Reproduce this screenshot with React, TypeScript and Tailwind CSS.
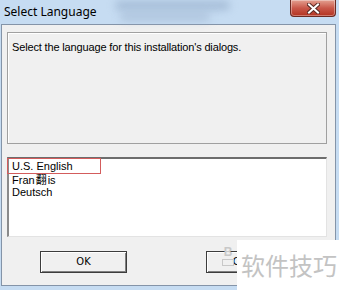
import React from 'react';

const dialogFont = { fontFamily: '"Liberation Sans", Arial, sans-serif' };
const cjkFont = { fontFamily: '"Noto Sans CJK SC", sans-serif' };

function CloseButton() {
  return (
    <div className="absolute top-0 right-[3px] w-[46px] h-[17px] rounded-b-[4px] border border-t-0 border-[#6b2a22] bg-gradient-to-b from-[#e3a091] via-[#c9584a] to-[#b3321f] flex items-center justify-center shadow-[inset_0_0_0_1px_rgba(255,255,255,0.35)]">
      <svg width="13" height="11" viewBox="0 0 13 11">
        <path d="M2 1.5 L11 9.5 M11 1.5 L2 9.5" stroke="#5a2a24" strokeWidth="4" strokeLinecap="square" />
        <path d="M2 1.5 L11 9.5 M11 1.5 L2 9.5" stroke="#ffffff" strokeWidth="2" strokeLinecap="square" />
      </svg>
    </div>
  );
}

function Button({ label }: { label: string }) {
  return (
    <div className="w-[87px] h-[22px] bg-[#f0f0f0] border border-[#3c3c3c] shadow-[inset_1px_1px_0_#ffffff,inset_-1px_-1px_0_#808080] flex items-center justify-center text-[11px] text-black" style={{ fontFamily: '"DejaVu Sans Condensed", "Liberation Sans", sans-serif' }}>
      {label}
    </div>
  );
}

export default function App() {
  return (
    <div className="relative w-[339px] h-[290px] overflow-hidden bg-[#c6dcf2] flex flex-col">
      {/* Title bar */}
      <div className="relative h-[24px] flex items-center pl-[4px] shrink-0">
        <div className="absolute left-[115px] top-[1px] w-[115px] h-[9px] rounded-full bg-[#8ea6c4] blur-[4px] opacity-60"></div>
        <div className="absolute left-[120px] top-[13px] w-[90px] h-[8px] rounded-full bg-[#95aac6] blur-[4px] opacity-50"></div>
        <span className="relative text-[12px] text-black" style={{ fontFamily: '"Noto Sans", "Open Sans", sans-serif' }}>Select Language</span>
        <CloseButton />
      </div>

      {/* Client area */}
      <div className="flex-1 ml-[1px] mr-[3px] mb-[4px] bg-[#f0f0f0] border border-[#8494a8] flex flex-col" style={dialogFont}>
        <div className="mt-[7px] ml-[5px] mr-[8px] h-[112px] border border-[#a0a0a0] shadow-[inset_1px_1px_0_#ffffff] px-[4px] pt-[6px] text-[11px] tracking-[-0.15px] text-black">
          Select the language for this installation's dialogs.
        </div>

        <div className="mt-[13px] ml-[5px] mr-[8px] h-[80px] bg-white border-t-2 border-l-2 border-t-[#6d6d6d] border-l-[#8a8a8a] border-b border-r border-b-[#e3e3e3] border-r-[#e3e3e3] pt-[1px] text-[11px] text-black">
          <div className="relative h-[13px] leading-[13px] pl-[3px] whitespace-nowrap">
            U.S. English
            <div className="absolute left-[-2px] top-[-2px] w-[94px] h-[16px] border border-[#d35c5c]"></div>
          </div>
          <div className="h-[13px] leading-[13px] pl-[3px] whitespace-nowrap">
            Fran<span className="inline-block text-[11px] leading-[13px] mx-[1px]" style={cjkFont}>翻</span>is
          </div>
          <div className="h-[13px] leading-[13px] pl-[3px] whitespace-nowrap">Deutsch</div>
        </div>

        <div className="mt-[14px] flex pl-[38px] gap-[79px]">
          <Button label="OK" />
          <Button label="Cancel" />
        </div>
      </div>

      {/* Watermark overlay */}
      <div className="absolute left-[237px] top-[240px] w-[102px] h-[50px] bg-white flex items-center pl-[4px]">
        <span className="text-[24px] text-[#c3c3c3]" style={cjkFont}>软件技巧</span>
      </div>
      <div className="absolute left-[222px] top-[246px] flex flex-col items-center text-[#c8c8c8]">
        <span className="text-[12px] leading-[12px] font-bold" style={dialogFont}>B</span>
        <div className="w-[12px] h-[7px] border border-[#c8c8c8] mt-[1px]"></div>
      </div>
    </div>
  );
}
